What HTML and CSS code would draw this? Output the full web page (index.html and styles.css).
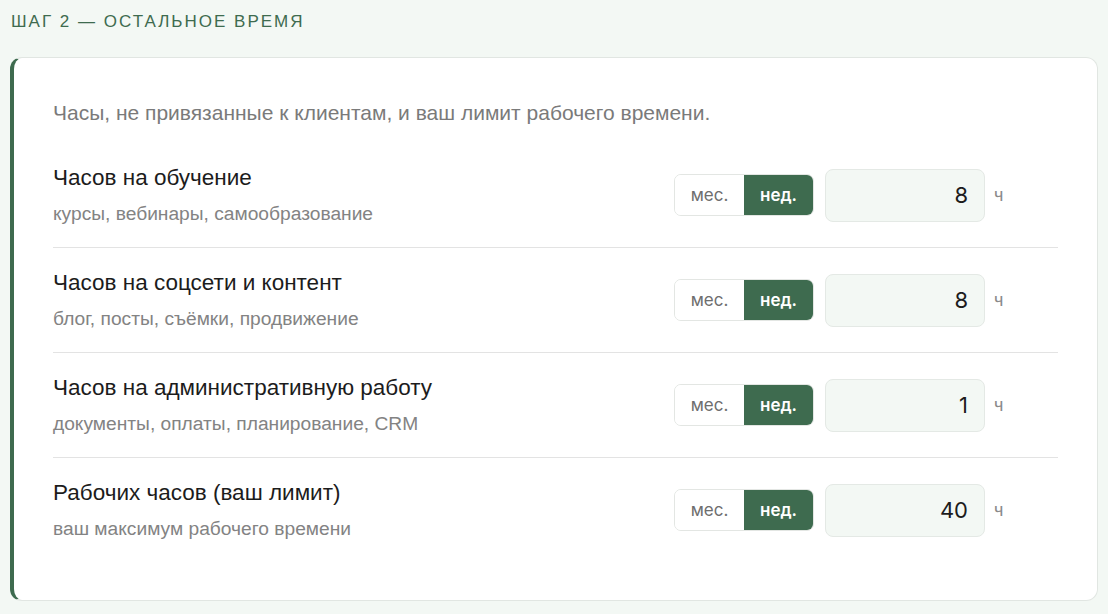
FILE: index.html
```html
<!DOCTYPE html>
<html lang="ru">
<head>
<meta charset="utf-8">
<link rel="stylesheet" href="styles.css">
</head>
<body>
<div class="page">
  <h2 class="step">ШАГ 2 — ОСТАЛЬНОЕ ВРЕМЯ</h2>
  <section class="card">
    <p class="desc">Часы, не привязанные к клиентам, и ваш лимит рабочего времени.</p>
    <div class="row">
      <div class="text">
        <div class="title">Часов на обучение</div>
        <div class="sub">курсы, вебинары, самообразование</div>
      </div>
      <div class="controls">
        <div class="toggle"><span class="opt">мес.</span><span class="opt active">нед.</span></div>
        <div class="field">8</div>
        <span class="unit">ч</span>
      </div>
    </div>
    <div class="row">
      <div class="text">
        <div class="title">Часов на соцсети и контент</div>
        <div class="sub">блог, посты, съёмки, продвижение</div>
      </div>
      <div class="controls">
        <div class="toggle"><span class="opt">мес.</span><span class="opt active">нед.</span></div>
        <div class="field">8</div>
        <span class="unit">ч</span>
      </div>
    </div>
    <div class="row">
      <div class="text">
        <div class="title">Часов на административную работу</div>
        <div class="sub">документы, оплаты, планирование, CRM</div>
      </div>
      <div class="controls">
        <div class="toggle"><span class="opt">мес.</span><span class="opt active">нед.</span></div>
        <div class="field">1</div>
        <span class="unit">ч</span>
      </div>
    </div>
    <div class="row last">
      <div class="text">
        <div class="title">Рабочих часов (ваш лимит)</div>
        <div class="sub">ваш максимум рабочего времени</div>
      </div>
      <div class="controls">
        <div class="toggle"><span class="opt">мес.</span><span class="opt active">нед.</span></div>
        <div class="field">40</div>
        <span class="unit">ч</span>
      </div>
    </div>
  </section>
</div>
</body>
</html>
```
FILE: styles.css
```css
* { box-sizing: border-box; }
html, body { margin: 0; padding: 0; }
body {
  background: #f3f8f4;
  font-family: "Liberation Sans", Arial, sans-serif;
  width: 1108px;
  height: 614px;
  overflow: hidden;
}
.page {
  padding: 12px 10px 0 10px;
}
.step {
  margin: 0 0 25px 1px;
  font-size: 17px;
  font-weight: 400;
  letter-spacing: 2px;
  color: #3e6b4f;
  line-height: 20px;
}
.card {
  background: #ffffff;
  border: 1px solid #e1e6e2;
  border-left: 4px solid #3e6b4f;
  border-radius: 12px;
  padding: 41px 39px 38px 39px;
  width: 1088px;
}
.desc {
  margin: 0 0 16px 0;
  font-size: 21px;
  line-height: 28px;
  color: #7a7a7a;
}
.row {
  display: flex;
  align-items: center;
  justify-content: space-between;
  padding: 22px 0;
  border-bottom: 1px solid #e3e3e3;
}
.row.last { border-bottom: none; }
.text {
  display: flex;
  flex-direction: column;
  gap: 12px;
}
.title {
  font-size: 22.5px;
  line-height: 26px;
  color: #1c1c1c;
}
.sub {
  font-size: 19.2px;
  line-height: 22px;
  color: #838383;
}
.controls {
  display: flex;
  align-items: center;
  margin-right: 52px;
}
.toggle {
  display: flex;
  border: 1px solid #e3e6e3;
  border-radius: 7px;
  overflow: hidden;
  height: 42px;
}
.opt {
  width: 69px;
  display: flex;
  align-items: center;
  justify-content: center;
  font-family: Inter, "Liberation Sans", sans-serif;
  font-size: 17px;
  color: #6e6e6e;
  background: #ffffff;
}
.opt.active {
  background: #3e6b4f;
  color: #ffffff;
  font-weight: 600;
}
.field {
  margin-left: 11px;
  width: 160px;
  height: 53px;
  background: #f3f8f4;
  border: 1px solid #e4e9e5;
  border-radius: 8px;
  display: flex;
  align-items: center;
  justify-content: flex-end;
  padding-right: 16px;
  font-family: Inter, "Liberation Sans", sans-serif;
  font-size: 22px;
  color: #1c1c1c;
}
.unit {
  margin-left: 9px;
  font-size: 18px;
  color: #8a8a8a;
  width: 12px;
}
```
